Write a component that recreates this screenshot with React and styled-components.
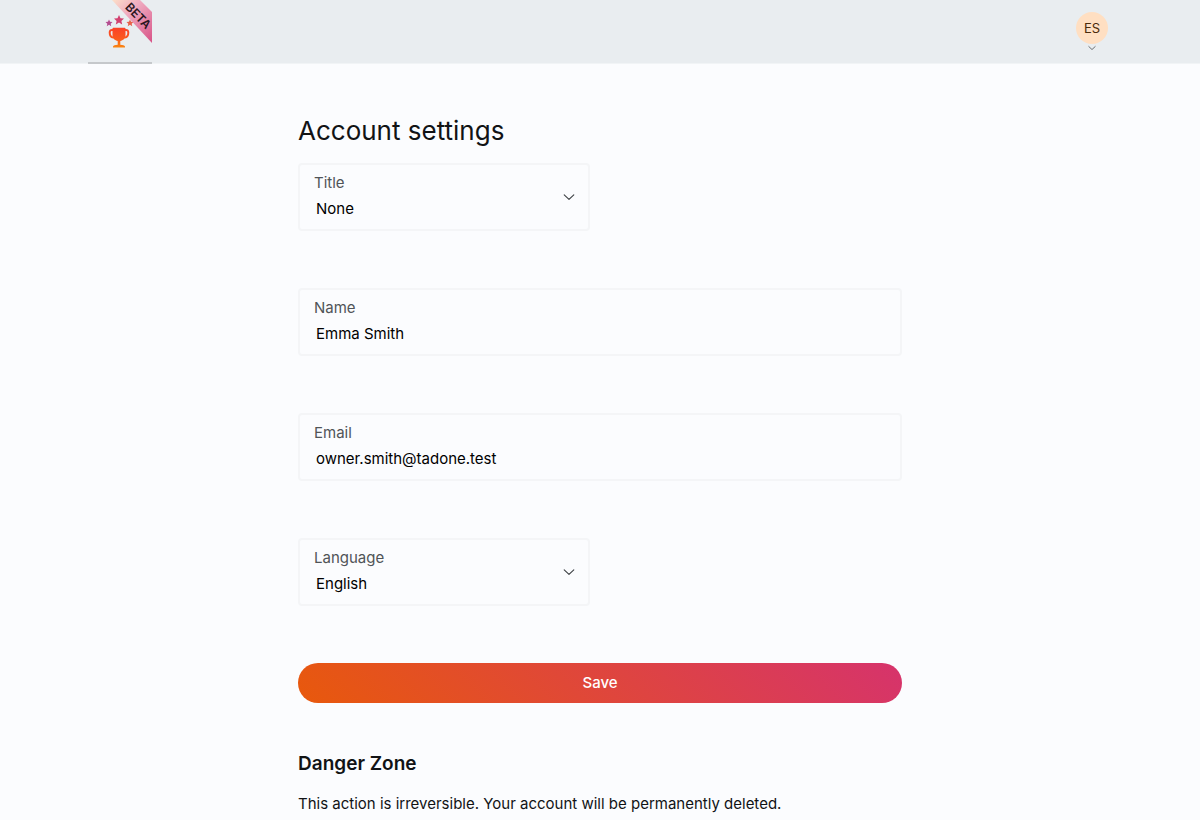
import React from 'react';
import styled, { createGlobalStyle } from 'styled-components';

const GlobalStyle = createGlobalStyle`
  *, *::before, *::after { box-sizing: border-box; }
  body {
    margin: 0;
    background: #fbfcfe;
    color: #111315;
    font-family: Inter, "Liberation Sans", sans-serif;
    font-size: 15px;
    line-height: 24px;
  }
`;

const Header = styled.header`
  background: #e9edf0;
  border-bottom: 1px solid #f1f4f6;
`;

const HeaderInner = styled.div`
  display: flex;
  justify-content: space-between;
  align-items: center;
  max-width: 1024px;
  height: 63px;
  margin: 0 auto;
`;

const LogoLink = styled.a`
  display: block;
  width: 64px;
  height: 64px;
  border-bottom: 2px solid #c5c8cb;
  align-self: flex-start;

  svg { display: block; }
`;

const BetaText = styled.text`
  font-size: 12px;
  font-weight: 600;
  fill: #2b1620;
`;

const AccountButton = styled.button`
  display: flex;
  flex-direction: column;
  align-items: center;
  margin-right: 4px;
  padding: 0;
  border: 0;
  background: none;
  font: inherit;
  cursor: pointer;
`;

const Avatar = styled.span`
  display: grid;
  place-items: center;
  width: 32px;
  height: 32px;
  border-radius: 50%;
  background: #ffdfc2;
  color: #4a2a0c;
  font-size: 13px;
`;

const Main = styled.main`
  max-width: 636px;
  margin: 0 auto;
  padding: 48px 16px 0;
`;

const PageTitle = styled.h1`
  margin: 0 0 13px;
  font-size: 26px;
  line-height: 38px;
  font-weight: 400;
`;

const Form = styled.form`
  display: grid;
  grid-template-columns: 1fr 1fr;
  column-gap: 20px;
  row-gap: 57px;
`;

const Field = styled.div`
  position: relative;
  grid-column: ${({ $half }) => ($half ? '1' : '1 / -1')};
  display: flex;
  flex-direction: column;
  padding: 6px 14px 7px;
  border: 2px solid #f4f5f7;
  border-radius: 4px;
`;

const Label = styled.label`
  color: #505457;
`;

const Input = styled.input`
  width: 100%;
  height: 27px;
  padding: 0 2px;
  border: 0;
  outline: 0;
  background: none;
  color: #000;
  font: inherit;
`;

const Select = styled(Input).attrs({ as: 'select' })`
  appearance: none;
`;

const FieldChevron = styled.span`
  position: absolute;
  top: 50%;
  right: 13px;
  transform: translateY(-50%);
  display: flex;
  pointer-events: none;
`;

const SaveButton = styled.button`
  grid-column: 1 / -1;
  height: 40px;
  border: 0;
  border-radius: 20px;
  background: linear-gradient(45deg, #e8590c, #d6336c);
  color: #fff;
  font: inherit;
  font-weight: 500;
  cursor: pointer;
`;

const DangerZone = styled.section`
  margin-top: 47px;
`;

const SectionTitle = styled.h2`
  margin: 0 0 14px;
  font-size: 19px;
  line-height: 28px;
  font-weight: 600;
`;

const Text = styled.p`
  margin: 0;
`;

function Chevron({ size = 12, color = '#3b3f42' }) {
  return (
    <svg width={size} height={size} viewBox="0 0 12 12" fill="none" aria-hidden="true">
      <path d="M1.2 3.800 6 8.300l4.800-4.500" stroke={color} strokeWidth="1.1" strokeLinecap="round" strokeLinejoin="round" />
    </svg>
  );
}

const STAR = 'M0-5 1.5-1.7 5-1.4 2.4 1 3.2 4.5 0 2.6-3.2 4.5-2.4 1-5-1.4-1.5-1.7Z';

function Logo() {
  return (
    <svg width="64" height="62" viewBox="0 0 64 62" role="img" aria-label="Beta">
      <defs>
        <linearGradient id="ribbon" x1="26" y1="0" x2="64" y2="40" gradientUnits="userSpaceOnUse">
          <stop offset="0" stopColor="#fbdcc8" />
          <stop offset="0.35" stopColor="#efabc0" />
          <stop offset="1" stopColor="#d9578a" />
        </linearGradient>
        <linearGradient id="cup" x1="0" y1="28" x2="0" y2="48" gradientUnits="userSpaceOnUse">
          <stop offset="0" stopColor="#fa4228" />
          <stop offset="0.55" stopColor="#fb5a1e" />
          <stop offset="1" stopColor="#f98a10" />
        </linearGradient>
      </defs>
      <path d={STAR} fill="#b44c90" transform="translate(21 23) scale(.7)" />
      <path d={STAR} fill="#d2406f" transform="translate(31 20)" />
      <path d={STAR} fill="#e8604a" transform="translate(42 23) scale(.7)" />
      <path d="M24.500 30c-2-.2-2.800.8-2.800 2.500 0 2.800 1.500 4.800 3.500 5M37.500 30c2-.2 2.800.8 2.800 2.500 0 2.800-1.500 4.800-3.500 5" fill="none" stroke="url(#cup)" strokeWidth="2" strokeLinecap="round" />
      <path d="M24.500 28.500q0-.7.8-.7h11.400q.8 0 .8.700V35c0 3.500-2.500 5.500-5.200 6v3.800c2.500.2 4.200.8 4.700 1.700v1H25v-1c.5-.9 2.200-1.500 4.700-1.700V41c-2.700-.5-5.200-2.500-5.200-6Z" fill="url(#cup)" />
      <path d="M24 0h28l12 12v31Z" fill="url(#ribbon)" />
      <BetaText x="50" y="20" textAnchor="middle" transform="rotate(46 50 16)">BETA</BetaText>
    </svg>
  );
}

function SelectField({ id, label, options }) {
  return (
    <Field $half>
      <Label htmlFor={id}>{label}</Label>
      <Select id={id}>
        {options.map((option) => <option key={option}>{option}</option>)}
      </Select>
      <FieldChevron><Chevron /></FieldChevron>
    </Field>
  );
}

function TextField({ id, label, type = 'text', value }) {
  return (
    <Field>
      <Label htmlFor={id}>{label}</Label>
      <Input id={id} type={type} defaultValue={value} />
    </Field>
  );
}

export default function App() {
  return (
    <>
      <GlobalStyle />
      <Header>
        <HeaderInner>
          <LogoLink href="#"><Logo /></LogoLink>
          <AccountButton type="button">
            <Avatar>ES</Avatar>
            <Chevron size={8} />
          </AccountButton>
        </HeaderInner>
      </Header>
      <Main>
        <PageTitle>Account settings</PageTitle>
        <Form onSubmit={(event) => event.preventDefault()}>
          <SelectField id="title" label="Title" options={['None']} />
          <TextField id="name" label="Name" value="Emma Smith" />
          <TextField id="email" label="Email" type="email" value="owner.smith@tadone.test" />
          <SelectField id="language" label="Language" options={['English']} />
          <SaveButton type="submit">Save</SaveButton>
        </Form>
        <DangerZone>
          <SectionTitle>Danger Zone</SectionTitle>
          <Text>This action is irreversible. Your account will be permanently deleted.</Text>
        </DangerZone>
      </Main>
    </>
  );
}
